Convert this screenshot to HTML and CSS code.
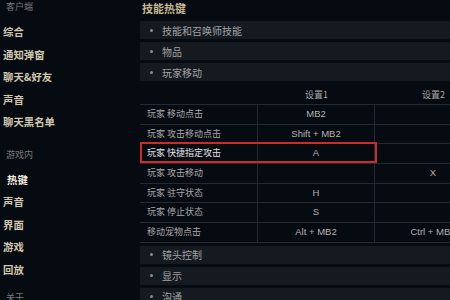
FILE: index.html
```html
<!DOCTYPE html>
<html lang="zh">
<head>
<meta charset="utf-8">
<title>技能热键</title>
<link rel="stylesheet" href="styles.css">
</head>
<body>
<div class="app">
  <nav class="sidebar">
    <div class="group-label first">客户端</div>
    <div class="nav-item">综合</div>
    <div class="nav-item">通知弹窗</div>
    <div class="nav-item">聊天&amp;好友</div>
    <div class="nav-item">声音</div>
    <div class="nav-item">聊天黑名单</div>
    <div class="group-label">游戏内</div>
    <div class="nav-item active">热键</div>
    <div class="nav-item">声音</div>
    <div class="nav-item">界面</div>
    <div class="nav-item">游戏</div>
    <div class="nav-item">回放</div>
    <div class="group-label last">关于</div>
  </nav>
  <main class="main">
    <h1 class="title">技能热键</h1>
    <div class="section"><span class="bullet"></span>技能和召唤师技能</div>
    <div class="section"><span class="bullet"></span>物品</div>
    <div class="section"><span class="bullet"></span>玩家移动</div>
    <div class="table">
      <div class="thead"><div></div><div>设置1</div><div>设置2</div></div>
      <div class="tbody">
        <div class="row"><div class="cell name">玩家 移动点击</div><div class="cell key">MB2</div><div class="cell key"></div></div>
        <div class="row"><div class="cell name">玩家 攻击移动点击</div><div class="cell key">Shift + MB2</div><div class="cell key"></div></div>
        <div class="row highlight"><div class="cell name">玩家 快捷指定攻击</div><div class="cell key">A</div><div class="cell key"></div><span class="hl"></span></div>
        <div class="row"><div class="cell name">玩家 攻击移动</div><div class="cell key"></div><div class="cell key">X</div></div>
        <div class="row"><div class="cell name">玩家 驻守状态</div><div class="cell key">H</div><div class="cell key"></div></div>
        <div class="row"><div class="cell name">玩家 停止状态</div><div class="cell key">S</div><div class="cell key"></div></div>
        <div class="row"><div class="cell name">移动宠物点击</div><div class="cell key">Alt + MB2</div><div class="cell key">Ctrl + MB2</div></div>
      </div>
    </div>
    <div class="section after"><span class="bullet"></span>镜头控制</div>
    <div class="section"><span class="bullet"></span>显示</div>
    <div class="section"><span class="bullet"></span>沟通</div>
  </main>
</div>
</body>
</html>
```

FILE: styles.css
```css
html, body {
  margin: 0;
  padding: 0;
  background: #060a11;
  overflow: hidden;
}
body {
  font-family: "Noto Sans CJK SC", "Liberation Sans", sans-serif;
}
.app {
  display: flex;
  width: 450px;
  height: 300px;
  overflow: hidden;
}
.sidebar {
  width: 140px;
  flex: none;
  display: flex;
  flex-direction: column;
}
.group-label {
  flex: none;
  height: 14px;
  line-height: 14px;
  font-size: 9px;
  color: #7c7c7c;
  padding-left: 6px;
  margin: 14px 0 7px;
}
.group-label.first {
  margin-top: 0;
}
.group-label.last {
  margin-top: 10px;
}
.nav-item {
  flex: none;
  height: 22.5px;
  line-height: 22.5px;
  font-size: 10.4px;
  font-weight: 700;
  color: #d0c7ae;
  padding-left: 3px;
}
.nav-item.active {
  color: #f0ebdc;
  padding-left: 7px;
}
.main {
  flex: 1;
  min-width: 0;
  overflow: hidden;
  display: flex;
  flex-direction: column;
}
.title {
  margin: 0 0 5px;
  padding-left: 2px;
  height: 16px;
  line-height: 16px;
  font-size: 11px;
  font-weight: 700;
  color: #c6b78e;
}
.section {
  flex: none;
  height: 18px;
  margin-bottom: 3px;
  background: #151a21;
  display: flex;
  align-items: center;
  font-size: 10px;
  color: #a2a2a2;
  padding-left: 10px;
}
.bullet {
  width: 3px;
  height: 3px;
  border-radius: 50%;
  background: #8a8a8a;
  margin-right: 9px;
}
.table {
  flex: none;
  width: 352px;
}
.thead {
  display: grid;
  grid-template-columns: 118px 117px 117px;
  height: 20px;
  box-sizing: border-box;
  padding-top: 5px;
  line-height: 12px;
  font-size: 9px;
  color: #a6a6a6;
}
.thead div {
  text-align: center;
}
.tbody {
  border-top: 1px solid #242a32;
}
.row {
  display: grid;
  grid-template-columns: 118px 117px 117px;
  height: 19.7px;
  box-sizing: border-box;
  border-bottom: 1px solid #242a32;
  position: relative;
}
.cell {
  line-height: 18.7px;
  font-size: 9px;
  color: #a8a8a8;
  border-right: 1px solid #242a32;
  white-space: nowrap;
}
.cell.name {
  padding-left: 7px;
}
.cell.key {
  text-align: center;
  font-family: "Liberation Sans", "Noto Sans CJK SC", sans-serif;
  font-size: 9.5px;
  color: #b3b3b3;
}
.row.highlight .cell.name {
  color: #e2e2e2;
}
.row.highlight .hl {
  position: absolute;
  left: 0;
  top: -2px;
  width: 237px;
  height: 21px;
  box-sizing: border-box;
  border: 2.5px solid #cf2a2a;
}
.section.after {
  margin-top: 3px;
}
```
